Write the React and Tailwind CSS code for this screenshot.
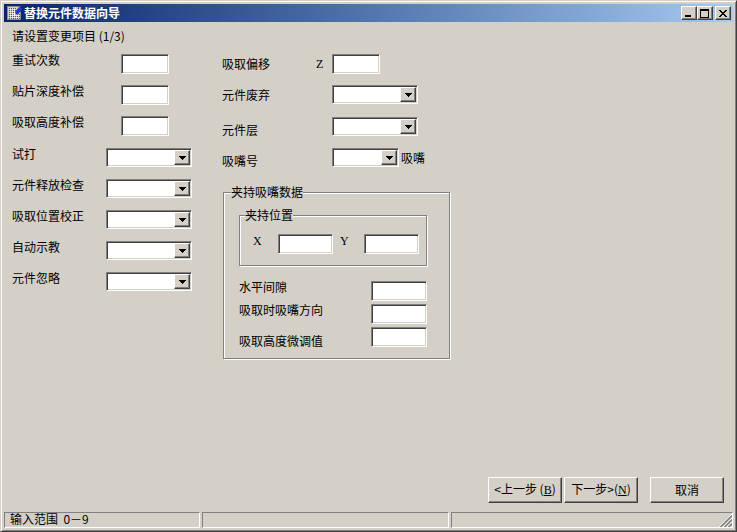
const sunken = 'border border-t-[#808080] border-l-[#808080] border-r-white border-b-white shadow-[inset_1px_1px_0_#404040,inset_-1px_-1px_0_#d4d0c8]'
const raised = 'bg-[#d4d0c8] border border-t-white border-l-white border-r-[#404040] border-b-[#404040] shadow-[inset_-1px_-1px_0_#808080]'
const etched = 'border border-[#808080] shadow-[1px_1px_0_#fff,inset_1px_1px_0_#fff]'

const retryFields = [
  { id: 'retry', label: '重试次数' },
  { id: 'placeDepth', label: '贴片深度补偿' },
  { id: 'pickHeight', label: '吸取高度补偿' },
]

const optionFields = [
  { id: 'trial', label: '试打' },
  { id: 'release', label: '元件释放检查' },
  { id: 'pickPos', label: '吸取位置校正' },
  { id: 'autoTeach', label: '自动示教' },
  { id: 'skip', label: '元件忽略' },
]

const gripFields = [
  { id: 'gap', label: '水平间隙', pad: '' },
  { id: 'direction', label: '吸取时吸嘴方向', pad: '' },
  { id: 'fineTune', label: '吸取高度微调值', pad: 'pt-2' },
]

function TextBox({ id, width }) {
  return <input id={id} type="text" className={`block h-5 shrink-0 bg-white px-1 outline-none ${sunken} ${width}`} />
}

function DropDown({ id, width }) {
  return (
    <div className={`relative h-[19px] shrink-0 ${width}`}>
      <select id={id} className={`block h-full w-full appearance-none bg-white px-1 outline-none ${sunken}`}>
        <option value=""></option>
      </select>
      <span className={`pointer-events-none absolute top-[2px] right-[2px] bottom-[2px] flex w-4 items-center justify-center ${raised}`}>
        <svg width="7" height="4" viewBox="0 0 7 4" shapeRendering="crispEdges"><path d="M0 0h7v1H6v1H5v1H4v1H3V3H2V2H1V1H0z" /></svg>
      </span>
    </div>
  )
}

function CaptionButton({ label, children }) {
  return (
    <button type="button" aria-label={label} className={`flex h-[14px] w-4 items-center justify-center ${raised}`}>
      <svg width="10" height="9" viewBox="0 0 10 9" shapeRendering="crispEdges">{children}</svg>
    </button>
  )
}

function WizardButton({ children }) {
  return <button type="button" className={`h-[26px] w-[74px] whitespace-nowrap pb-px ${raised}`}>{children}</button>
}

function Latin({ children }) {
  return <span className="font-['Liberation_Serif',serif]">{children}</span>
}

export default function App() {
  return (
    <div className="flex min-h-screen flex-col border border-t-[#d4d0c8] border-l-[#d4d0c8] border-r-[#404040] border-b-[#404040] bg-[#d4d0c8] p-[3px] font-['Noto_Sans_CJK_SC',sans-serif] text-[12px] leading-3 text-black shadow-[inset_1px_1px_0_#fff,inset_-1px_-1px_0_#808080]">
      {/* Title bar */}
      <header className="flex h-[18px] items-center bg-linear-to-r from-[#0a246a] to-[#a6caf0] pr-[2px] pl-[3px]">
        <svg width="16" height="16" viewBox="0 0 16 16" shapeRendering="crispEdges">
          <path fill="#d4d0c8" d="M0 1h14v14H0z" />
          <path stroke="#55565a" strokeDasharray="1 1" d="M2 3.5h7M2 5.5h7M2 7.5h7M2 9.5h11M2 11.5h11M2 13.5h11" />
          <path stroke="#f4f4f0" strokeDasharray="1 1" d="M3 4.5h6M3 6.5h5M3 8.5h5M3 10.5h9M3 12.5h9" />
          <path fill="none" stroke="#8c8c88" d="M.5 1.5h13v13H.5z" />
          <path shapeRendering="auto" fill="#fff" d="M6.5 10.5l1-4 1.5-.5 2 2-.8 1.6z" />
          <path shapeRendering="auto" fill="#2838c8" stroke="#141c90" strokeWidth=".6" d="M8.5 6.5L13 1.5l2.6 2.2-4.4 5.1-2.4.4z" />
        </svg>
        <h1 className="ml-px flex-1 font-bold text-white">替换元件数据向导</h1>
        <div className="flex">
          <CaptionButton label="最小化"><path d="M1 6h6v2H1z" /></CaptionButton>
          <CaptionButton label="最大化"><path fillRule="evenodd" d="M0 0h9v9H0zM1 2v6h7V2z" /></CaptionButton>
          <div className="ml-[2px] flex">
            <CaptionButton label="关闭"><path d="M1 1h2v1h1v1h2V2h1V1h2v1H8v1H7v1H6v1h1v1h1v1h1v1H7V7H6V6H4v1H3v1H1V7h1V6h1V5h1V4H3V3H2V2H1z" /></CaptionButton>
          </div>
        </div>
      </header>

      <form className="flex flex-1 flex-col" onSubmit={e => e.preventDefault()}>
        <p className="mt-2 ml-2">请设置变更项目 (1/3)</p>

        <div className="mt-3 ml-2 flex">
          <div className="w-[210px]">
            {retryFields.map(f => (
              <div key={f.id} className="flex h-[31px] items-start">
                <label htmlFor={f.id} className="w-[109px]">{f.label}</label>
                <TextBox id={f.id} width="w-12" />
              </div>
            ))}
            <div className="mt-px">
              {optionFields.map(f => (
                <div key={f.id} className="flex h-[31px] items-start">
                  <label htmlFor={f.id} className="w-[94px]">{f.label}</label>
                  <DropDown id={f.id} width="w-[86px]" />
                </div>
              ))}
            </div>
          </div>

          <div>
            <div className="flex h-[31px] items-start">
              <label htmlFor="offsetZ" className="flex w-[110px] pt-1">
                <span className="w-[94px]">吸取偏移</span><Latin>Z</Latin>
              </label>
              <TextBox id="offsetZ" width="w-12" />
            </div>
            <div className="flex h-8 items-start">
              <label htmlFor="discard" className="w-[110px] pt-1">元件废弃</label>
              <DropDown id="discard" width="w-[86px]" />
            </div>
            <div className="flex h-[31px] items-start">
              <label htmlFor="layer" className="w-[110px] pt-[7px]">元件层</label>
              <DropDown id="layer" width="w-[86px]" />
            </div>
            <div className="flex h-[31px] items-start">
              <label htmlFor="nozzle" className="w-[110px] pt-[7px]">吸嘴号</label>
              <DropDown id="nozzle" width="w-[67px]" />
              <span className="ml-[2px] pt-1">吸嘴</span>
            </div>

            {/* Gripper nozzle data */}
            <fieldset className={`mt-[7px] ml-px w-[227px] px-[15px] pb-[11px] ${etched}`}>
              <legend className="-ml-2 bg-[#d4d0c8]">夹持吸嘴数据</legend>
              <fieldset className={`mt-[11px] w-[188px] pt-[13px] pb-[11px] pl-[13px] ${etched}`}>
                <legend className="-ml-2 bg-[#d4d0c8]">夹持位置</legend>
                <div className="flex items-start">
                  <label htmlFor="gripX" className="w-[25px]"><Latin>X</Latin></label>
                  <TextBox id="gripX" width="w-[55px]" />
                  <label htmlFor="gripY" className="ml-[7px] w-6"><Latin>Y</Latin></label>
                  <TextBox id="gripY" width="w-[55px]" />
                </div>
              </fieldset>
              <div className="mt-[15px] flex flex-col gap-[3px]">
                {gripFields.map(f => (
                  <div key={f.id} className="flex items-start">
                    <label htmlFor={f.id} className={`w-[132px] ${f.pad}`}>{f.label}</label>
                    <TextBox id={f.id} width="w-14" />
                  </div>
                ))}
              </div>
            </fieldset>
          </div>
        </div>

        <div className="mt-auto mr-[9px] mb-[9px] flex justify-end">
          <WizardButton>&lt;上一步 (<Latin><u>B</u></Latin>)</WizardButton>
          <div className="mr-3 ml-[2px] flex"><WizardButton>下一步&gt;(<Latin><u>N</u></Latin>)</WizardButton></div>
          <WizardButton>取消</WizardButton>
        </div>
      </form>

      {/* Status bar */}
      <footer className="flex h-4 gap-[2px]">
        <div className="w-[196px] border border-t-[#808080] border-l-[#808080] border-r-white border-b-white pl-[5px]">输入范围&nbsp; 0－9</div>
        <div className="w-[247px] border border-t-[#808080] border-l-[#808080] border-r-white border-b-white"></div>
        <div className="flex flex-1 items-end justify-end border border-t-[#808080] border-l-[#808080] border-r-white border-b-white">
          <svg width="13" height="13" viewBox="0 0 13 13">
            <path stroke="#fff" d="M0 13L13 0M4 13l9-9M8 13l5-5" />
            <path stroke="#808080" strokeWidth="1.6" d="M1.5 13L13 1.5M5.5 13L13 5.5M9.5 13L13 9.5" />
          </svg>
        </div>
      </footer>
    </div>
  )
}
